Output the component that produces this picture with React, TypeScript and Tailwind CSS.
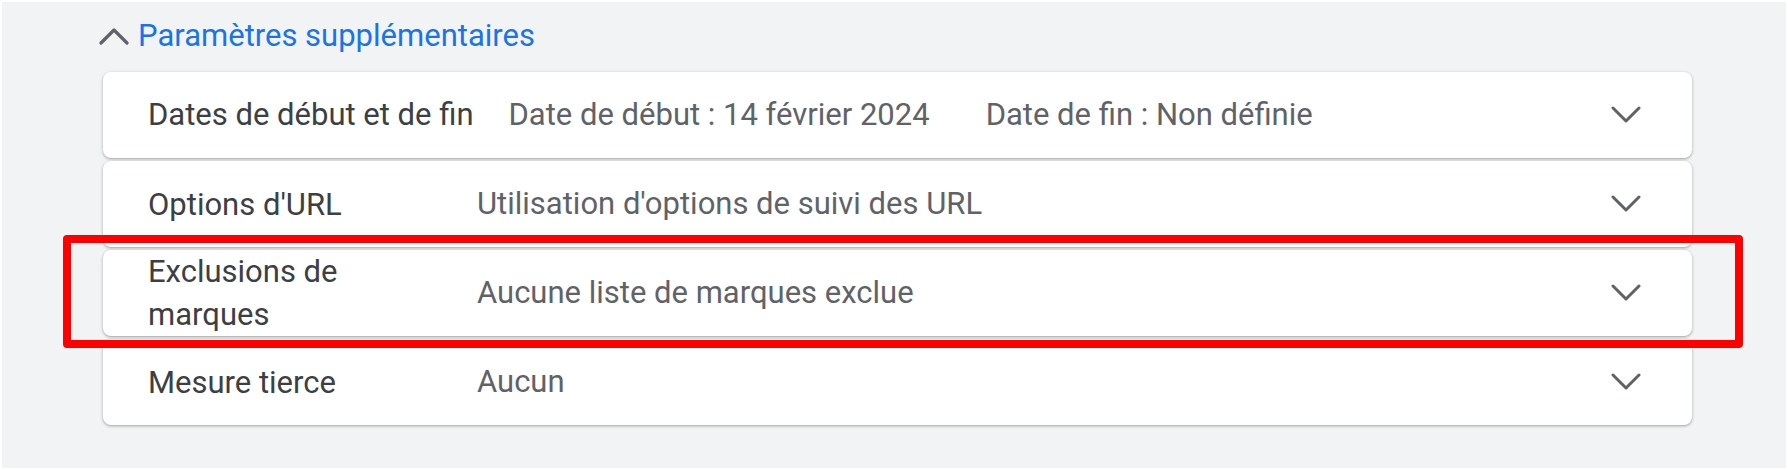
import React from 'react';

type Row = {
	label: string;
	values: string[];
};

const ROWS: Row[] = [
	{
		label: "Options d'URL",
		values: ["Utilisation d'options de suivi des URL"],
	},
	{
		label: 'Exclusions de marques',
		values: ['Aucune liste de marques exclue'],
	},
	{
		label: 'Mesure tierce',
		values: ['Aucun'],
	},
];

function ChevronDown() {
	return (
		<svg width="30" height="18" viewBox="0 0 30 18" fill="none" className="shrink-0">
			<polyline
				points="2,2 15,15 28,2"
				stroke="#5f6368"
				strokeWidth="3"
				strokeLinecap="round"
				strokeLinejoin="round"
			/>
		</svg>
	);
}

function ChevronUp() {
	return (
		<svg width="30" height="17" viewBox="0 0 30 17" fill="none" className="shrink-0">
			<polyline
				points="2,15 15,2 28,15"
				stroke="#5f6368"
				strokeWidth="3.2"
				strokeLinecap="round"
				strokeLinejoin="round"
			/>
		</svg>
	);
}

const panel =
	'flex items-center h-[86px] pl-[45px] pr-[51px] bg-white rounded-[8px] shadow-[0_1px_2px_rgba(60,64,67,0.3),0_1px_3px_1px_rgba(60,64,67,0.12)]';

export default function App() {
	return (
		<div className="w-[1788px] h-[470px] bg-white p-[2px] font-['Roboto',sans-serif]">
			<div className="relative h-full bg-[#f1f3f4] pt-[16px]">
				<div className="flex items-center gap-[9px] pl-[97px] h-[36px]">
					<ChevronUp />
					<span className="text-[31px] leading-[36px] text-[#1a73e8]">
						Paramètres supplémentaires
					</span>
				</div>

				<div className="ml-[101px] mt-[18px] w-[1589px] flex flex-col gap-[3px]">
					{/* start / end dates */}
					<div className={panel}>
						<span className="text-[31px] leading-[42px] text-[#3c4043] mr-[35px]">
							Dates de début et de fin
						</span>
						<span className="text-[31px] leading-[42px] text-[#5f6368] mr-[56px]">
							Date de début : 14 février 2024
						</span>
						<span className="text-[31px] leading-[42px] text-[#5f6368]">
							Date de fin : Non définie
						</span>
						<div className="flex-1" />
						<ChevronDown />
					</div>

					{ROWS.map((row) => (
						<div key={row.label} className={panel}>
							<span className="w-[300px] mr-[29px] shrink-0 text-[31px] leading-[43px] text-[#3c4043]">
								{row.label}
							</span>
							{row.values.map((v) => (
								<span key={v} className="text-[31px] leading-[42px] text-[#5f6368]">
									{v}
								</span>
							))}
							<div className="flex-1" />
							<ChevronDown />
						</div>
					))}
				</div>

				{/* annotation box */}
				<div className="absolute left-[61px] top-[233px] w-[1680px] h-[113px] border-[8px] border-[#ff0000] rounded-[4px] pointer-events-none" />
			</div>
		</div>
	);
}
